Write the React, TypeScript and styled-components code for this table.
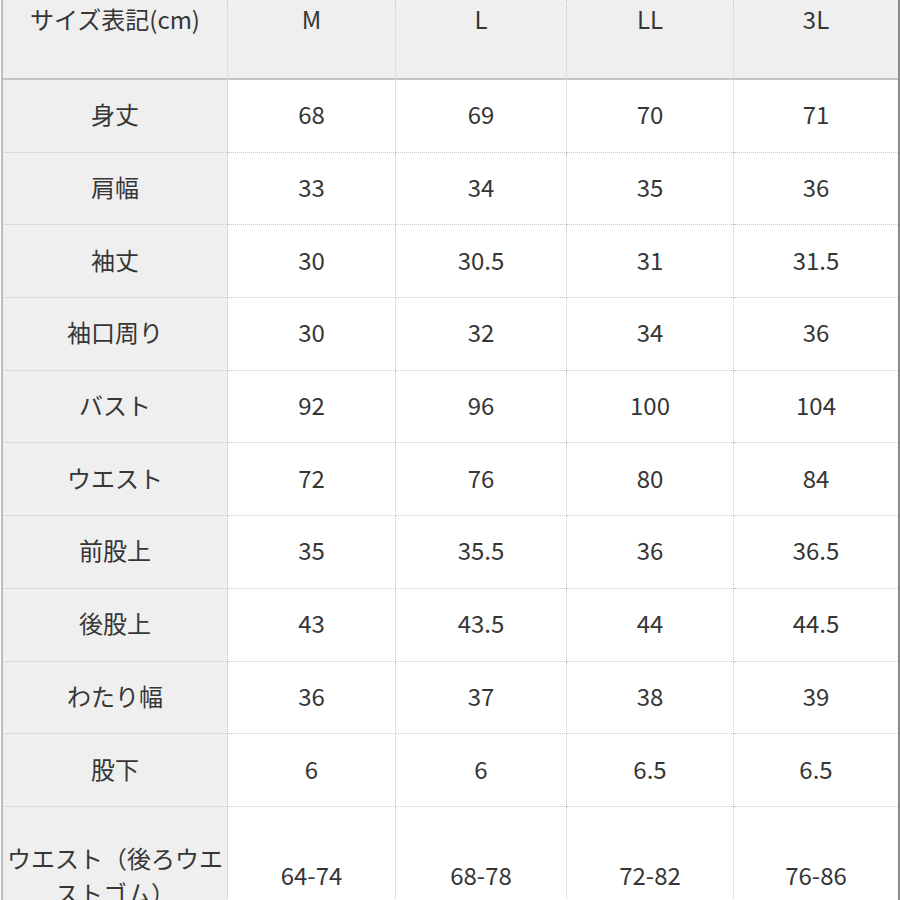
import React from "react";
import styled, { createGlobalStyle } from "styled-components";

const Global = createGlobalStyle`
  html, body { margin: 0; padding: 0; background: #ffffff; }
  body { font-family: "Noto Sans CJK JP", "Noto Sans", sans-serif; overflow: hidden; }
`;

const Grid = styled.div`
  display: grid;
  grid-template-columns: 225px 168px 171px 167px 164px;
  grid-template-rows: 80px repeat(10, 72.7px) 140px;
  margin-left: 1px;
  width: 899px;
  box-sizing: border-box;
  border-left: 2px solid #bdbdbd;
  border-right: 2px solid #8a8a8a;
  color: #363636;
  font-size: 24px;
`;

const Cell = styled.div<{ $head?: boolean; $label?: boolean; $last?: boolean; $lastCol?: boolean }>`
  display: flex;
  align-items: ${(p) => (p.$head ? "flex-start" : "center")};
  justify-content: center;
  text-align: center;
  box-sizing: border-box;
  padding: ${(p) => (p.$head ? "1px 4px 0" : p.$last ? "0 4px 4px" : "0 4px 4px")};
  line-height: 35px;
  background: ${(p) => (p.$head || p.$label ? "#efefef" : "#ffffff")};
  border-bottom: ${(p) =>
    p.$head ? "2px solid #c4c4c4" : p.$last ? "none" : "1px dotted #c8c8c8"};
  border-right: ${(p) => (p.$lastCol ? "none" : "1px dotted #c8c8c8")};
  white-space: normal;
  word-break: break-all;
`;

const header = ["サイズ表記(cm)", "M", "L", "LL", "3L"];

const rows: string[][] = [
  ["身丈", "68", "69", "70", "71"],
  ["肩幅", "33", "34", "35", "36"],
  ["袖丈", "30", "30.5", "31", "31.5"],
  ["袖口周り", "30", "32", "34", "36"],
  ["バスト", "92", "96", "100", "104"],
  ["ウエスト", "72", "76", "80", "84"],
  ["前股上", "35", "35.5", "36", "36.5"],
  ["後股上", "43", "43.5", "44", "44.5"],
  ["わたり幅", "36", "37", "38", "39"],
  ["股下", "6", "6", "6.5", "6.5"],
  ["ウエスト（後ろウエストゴム）", "64-74", "68-78", "72-82", "76-86"],
];

export default function App() {
  return (
    <>
      <Global />
      <Grid>
        {header.map((h, i) => (
          <Cell key={`h${i}`} $head $lastCol={i === 4}>
            {h}
          </Cell>
        ))}
        {rows.map((r, ri) =>
          r.map((v, ci) => (
            <Cell
              key={`${ri}-${ci}`}
              $label={ci === 0}
              $last={ri === rows.length - 1}
              $lastCol={ci === 4}
            >
              {v}
            </Cell>
          ))
        )}
      </Grid>
    </>
  );
}
